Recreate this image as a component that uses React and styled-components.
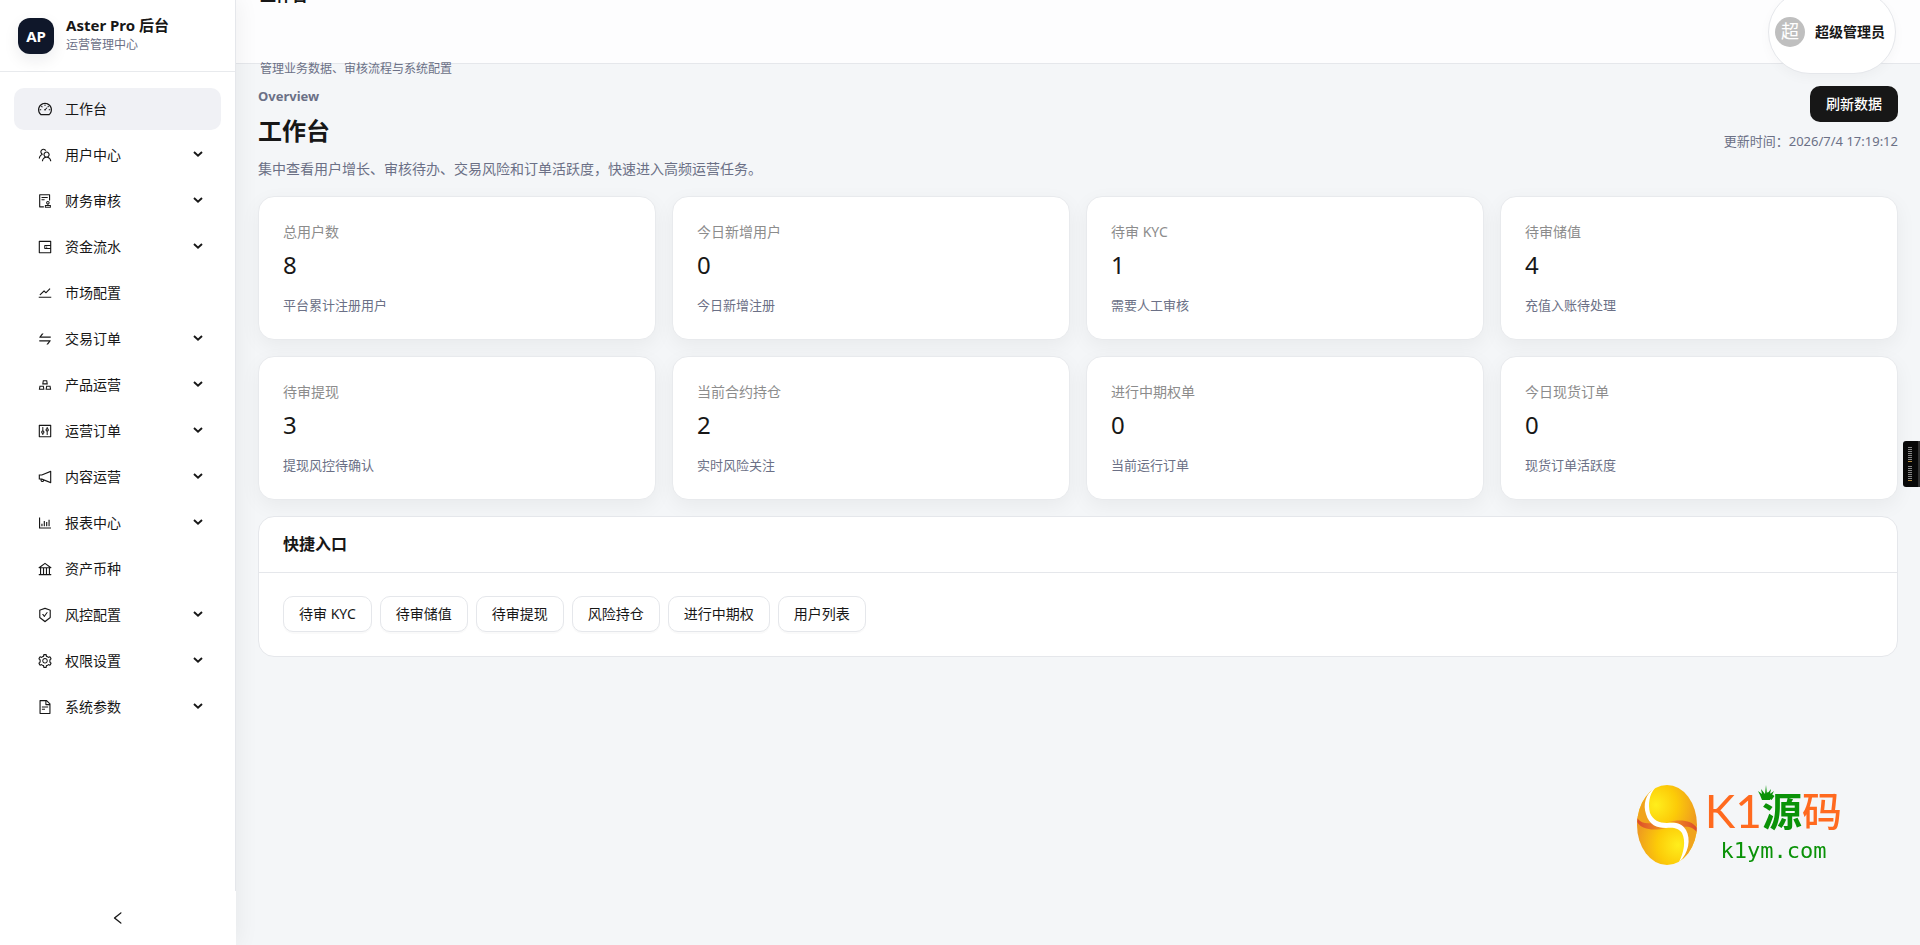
import React from 'react';
import styled, { createGlobalStyle } from 'styled-components';
import {
  AiOutlineDashboard,
  AiOutlineTeam,
  AiOutlineAudit,
  AiOutlineWallet,
  AiOutlineStock,
  AiOutlineSwap,
  AiOutlineGold,
  AiOutlineControl,
  AiOutlineNotification,
  AiOutlineBarChart,
  AiOutlineBank,
  AiOutlineSafetyCertificate,
  AiOutlineSetting,
  AiOutlineFileText,
  AiOutlineLeft,
} from 'react-icons/ai';

const menus = [
  { label: '工作台', icon: AiOutlineDashboard, active: true },
  { label: '用户中心', icon: AiOutlineTeam, sub: true },
  { label: '财务审核', icon: AiOutlineAudit, sub: true },
  { label: '资金流水', icon: AiOutlineWallet, sub: true },
  { label: '市场配置', icon: AiOutlineStock },
  { label: '交易订单', icon: AiOutlineSwap, sub: true },
  { label: '产品运营', icon: AiOutlineGold, sub: true },
  { label: '运营订单', icon: AiOutlineControl, sub: true },
  { label: '内容运营', icon: AiOutlineNotification, sub: true },
  { label: '报表中心', icon: AiOutlineBarChart, sub: true },
  { label: '资产币种', icon: AiOutlineBank },
  { label: '风控配置', icon: AiOutlineSafetyCertificate, sub: true },
  { label: '权限设置', icon: AiOutlineSetting, sub: true },
  { label: '系统参数', icon: AiOutlineFileText, sub: true },
];

const stats = [
  { title: '总用户数', value: 8, note: '平台累计注册用户' },
  { title: '今日新增用户', value: 0, note: '今日新增注册' },
  { title: '待审 KYC', value: 1, note: '需要人工审核' },
  { title: '待审储值', value: 4, note: '充值入账待处理' },
  { title: '待审提现', value: 3, note: '提现风控待确认' },
  { title: '当前合约持仓', value: 2, note: '实时风险关注' },
  { title: '进行中期权单', value: 0, note: '当前运行订单' },
  { title: '今日现货订单', value: 0, note: '现货订单活跃度' },
];

const shortcuts = ['待审 KYC', '待审储值', '待审提现', '风险持仓', '进行中期权', '用户列表'];

const Chevron = () => (
  <svg width="10" height="10" viewBox="0 0 10 10" fill="none" aria-hidden="true">
    <path d="M1 2 5 5.8 9 2" stroke="currentColor" strokeWidth="1.9" />
  </svg>
);

const Sidebar = () => (
  <Sider>
    <Brand>
      <BrandMark>AP</BrandMark>
      <BrandText>
        <BrandName>Aster Pro 后台</BrandName>
        <BrandNote>运营管理中心</BrandNote>
      </BrandText>
    </Brand>
    <Menu>
      {menus.map(({ label, icon: Icon, sub, active }) => (
        <li key={label}>
          {sub ? (
            <MenuItem as="button" type="button" aria-expanded="false">
              <Icon size={16} />
              <span>{label}</span>
              <Chevron />
            </MenuItem>
          ) : (
            <MenuItem href="#" $active={active}>
              <Icon size={16} />
              <span>{label}</span>
            </MenuItem>
          )}
        </li>
      ))}
    </Menu>
    <Collapse type="button" aria-label="收起菜单">
      <AiOutlineLeft size={16} />
    </Collapse>
  </Sider>
);

const SiteLogo = () => (
  <Logo>
    <svg width="60" height="80" viewBox="0 0 60 80" aria-hidden="true">
      <defs>
        <clipPath id="coin">
          <ellipse cx="30" cy="40" rx="30" ry="40" />
        </clipPath>
        <radialGradient id="gold-top" gradientUnits="userSpaceOnUse" cx="19" cy="20" r="42">
          <stop offset="0" stopColor="#ffee1c" />
          <stop offset="0.5" stopColor="#fccb08" />
          <stop offset="1" stopColor="#ee9a20" />
        </radialGradient>
        <radialGradient id="gold-bottom" gradientUnits="userSpaceOnUse" cx="41" cy="60" r="42">
          <stop offset="0" stopColor="#ffee1c" />
          <stop offset="0.5" stopColor="#fccb08" />
          <stop offset="1" stopColor="#ee9a20" />
        </radialGradient>
        <linearGradient id="edge-left" x1="0" y1="0" x2="1" y2="0">
          <stop offset="0" stopColor="#dc4a2c" />
          <stop offset="1" stopColor="#f4a01e" />
        </linearGradient>
        <linearGradient id="edge-right" x1="1" y1="0" x2="0" y2="0">
          <stop offset="0" stopColor="#dc4a2c" />
          <stop offset="1" stopColor="#f4a01e" />
        </linearGradient>
      </defs>
      <g clipPath="url(#coin)">
        <path d="M0 0H60V44C54 41 48 40 40 40H0Z" fill="url(#gold-top)" />
        <path d="M0 35C6 40 14 42 26 41H40C48 40 54 42 60 46V80H0Z" fill="url(#gold-bottom)" />
        <path d="M18 0C2 8-4 24 0 36 6 40 11 40 17 39 5 28 8 12 18 2Z" fill="#f0a41e" />
        <path d="M42 80C58 72 62 56 60 44 54 41 49 41 44 41 55 52 52 68 42 78Z" fill="#f0a41e" />
        <path d="M0 33C4 38 9 39 15 38 18 41 23 43 29 43 17 46 5 45 0 37Z" fill="url(#edge-left)" />
        <path d="M60 47C56 42 51 41 46 42 42 38 37 37 31 37 43 34 55 35 60 43Z" fill="url(#edge-right)" />
      </g>
      <path
        d="M18 3C8 9 6 20 9 29 12 40 20 43 29 43 36 42 42 43 45 48 49 56 47 67 42 77 52 68 54 54 49 45 45 38 38 37 30 38 22 38 16 35 13 28 11 19 12 10 18 3Z"
        fill="#fff"
      />
    </svg>
    <div>
      <LogoTitle>
        <LogoLatin>K1</LogoLatin>
        <LogoGreen>
          <Crown width="16" height="16" viewBox="0 0 16 16" aria-hidden="true">
            <path
              d="M4 15 2 10 0 6l4 3-1-5 4 5L8 0l1 9 4-5-1 5 4-3-2 4-2 5Z"
              fill="#0a9208"
            />
          </Crown>
          源
        </LogoGreen>
        <LogoOrange>码</LogoOrange>
      </LogoTitle>
      <LogoDomain>k1ym.com</LogoDomain>
    </div>
  </Logo>
);

const App = () => {
  return (
    <Layout>
      <GlobalStyle />
      <Sidebar />
      <Main>
        <Header>
          <HeaderText>
            <HeaderTitle>工作台</HeaderTitle>
            <HeaderNote>管理业务数据、审核流程与系统配置</HeaderNote>
          </HeaderText>
          <UserPill type="button">
            <Avatar>超</Avatar>
            <span>超级管理员</span>
          </UserPill>
        </Header>
        <Content>
          <PageHead>
            <div>
              <Eyebrow>Overview</Eyebrow>
              <PageTitle>工作台</PageTitle>
              <PageNote>集中查看用户增长、审核待办、交易风险和订单活跃度，快速进入高频运营任务。</PageNote>
            </div>
            <PageActions>
              <RefreshButton type="button">刷新数据</RefreshButton>
              <UpdatedAt>更新时间：2026/7/4 17:19:12</UpdatedAt>
            </PageActions>
          </PageHead>
          <StatGrid>
            {stats.map(({ title, value, note }) => (
              <StatCard key={title}>
                <StatTitle>{title}</StatTitle>
                <StatValue>{value}</StatValue>
                <StatNote>{note}</StatNote>
              </StatCard>
            ))}
          </StatGrid>
          <Panel>
            <PanelTitle>快捷入口</PanelTitle>
            <PanelBody>
              {shortcuts.map((name) => (
                <ShortcutButton type="button" key={name}>
                  {name}
                </ShortcutButton>
              ))}
            </PanelBody>
          </Panel>
        </Content>
      </Main>
      <SiteLogo />
      <SideWidget aria-hidden="true">
        <WidgetBars />
        <WidgetBars />
      </SideWidget>
    </Layout>
  );
};
export default App;

const GlobalStyle = createGlobalStyle`
  * {
    box-sizing: border-box;
  }
  body {
    margin: 0;
    background-color: #f4f6f8;
    color: #171717;
    font-family: 'Noto Sans', 'Noto Sans CJK SC', sans-serif;
    font-size: 14px;
    line-height: 22px;
  }
  button {
    font: inherit;
    color: inherit;
    cursor: pointer;
  }
  h1, h2, p, ul {
    margin: 0;
    padding: 0;
  }
`;
const Layout = styled.div`
  display: flex;
  min-height: 100vh;
`;
const Sider = styled.aside`
  position: sticky;
  top: 0;
  z-index: 3;
  display: flex;
  flex-direction: column;
  flex: 0 0 236px;
  height: 100vh;
  background-color: #fff;
  border-right: 1px solid #e5e7eb;
  box-shadow: 4px 0 20px rgba(0, 0, 0, 0.05);
`;
const Brand = styled.div`
  display: flex;
  align-items: center;
  gap: 12px;
  flex: 0 0 72px;
  padding: 0 18px;
  border-bottom: 1px solid #e8eaed;
`;
const BrandMark = styled.div`
  display: flex;
  align-items: center;
  justify-content: center;
  width: 36px;
  height: 36px;
  border-radius: 12px;
  background-color: #0f172a;
  box-shadow: 0 6px 16px rgba(15, 23, 42, 0.08);
  color: #fff;
  font-size: 15px;
  font-weight: 700;
`;
const BrandText = styled.div`
  padding-bottom: 2px;
`;
const BrandName = styled.div`
  font-size: 15px;
  font-weight: 700;
  line-height: 20px;
`;
const BrandNote = styled.div`
  color: #6b7086;
  font-size: 12px;
  line-height: 20px;
`;
const Menu = styled.ul`
  display: flex;
  flex-direction: column;
  gap: 4px;
  flex: 1;
  min-height: 0;
  overflow: hidden;
  padding: 16px 14px;
  list-style: none;
`;
const MenuItem = styled.a`
  display: flex;
  align-items: center;
  gap: 12px;
  width: 100%;
  height: 42px;
  padding: 0 18px 0 23px;
  border: none;
  border-radius: 10px;
  background-color: ${({ $active }) => ($active ? '#f0f1f5' : 'transparent')};
  color: #171717;
  text-align: left;
  text-decoration: none;
  span {
    flex: 1;
  }
`;
const Collapse = styled.button`
  display: flex;
  align-items: center;
  justify-content: center;
  flex: 0 0 54px;
  margin-right: -1px;
  border: none;
  background-color: #fff;
`;
const Main = styled.div`
  flex: 1;
  min-width: 0;
`;
const Header = styled.header`
  position: sticky;
  top: 0;
  z-index: 2;
  display: flex;
  align-items: center;
  justify-content: space-between;
  height: 64px;
  padding: 0 24px;
  background-color: #fdfdfe;
  border-bottom: 1px solid #e5e7eb;
  line-height: 64px;
`;
const HeaderText = styled.div`
  display: flex;
  flex-direction: column;
  gap: 10px;
`;
const HeaderTitle = styled.div`
  font-size: 16px;
  font-weight: 700;
`;
const HeaderNote = styled.div`
  color: #6b7086;
  font-size: 12px;
`;
const UserPill = styled.button`
  display: flex;
  align-items: center;
  gap: 10px;
  padding: 9px 10px 9px 6px;
  border: 1px solid #e5e7eb;
  border-radius: 999px;
  background-color: #fff;
  box-shadow: 0 4px 12px rgba(0, 0, 0, 0.03);
  font-weight: 600;
  line-height: 64px;
`;
const Avatar = styled.span`
  width: 30px;
  height: 30px;
  border-radius: 50%;
  background-color: #bfbfbf;
  color: #fff;
  font-size: 18px;
  font-weight: 400;
  line-height: 28px;
  text-align: center;
`;
const Content = styled.main`
  display: flex;
  flex-direction: column;
  gap: 16px;
  padding: 22px;
`;
const PageHead = styled.div`
  display: flex;
  justify-content: space-between;
`;
const Eyebrow = styled.div`
  color: #6b7086;
  font-size: 13px;
  font-weight: 700;
  line-height: 20px;
`;
const PageTitle = styled.h1`
  margin: 6px 0 8px;
  font-size: 24px;
  font-weight: 700;
  line-height: 38px;
`;
const PageNote = styled.p`
  color: #6b7086;
`;
const PageActions = styled.div`
  display: flex;
  flex-direction: column;
  align-items: flex-end;
  gap: 8px;
`;
const RefreshButton = styled.button`
  height: 36px;
  padding: 0 16px;
  border: none;
  border-radius: 10px;
  background-color: #171717;
  color: #fff;
  font-weight: 500;
`;
const UpdatedAt = styled.div`
  color: #6b7086;
  font-size: 13px;
`;
const StatGrid = styled.div`
  display: grid;
  grid-template-columns: repeat(4, 1fr);
  gap: 16px;
  @media (max-width: 1024px) {
    grid-template-columns: repeat(2, 1fr);
  }
`;
const StatCard = styled.section`
  padding: 24px;
  border: 1px solid #e8eaed;
  border-radius: 16px;
  background-color: #fff;
  box-shadow: 0 6px 20px rgba(0, 0, 0, 0.05);
`;
const StatTitle = styled.div`
  color: #8c8c8c;
`;
const StatValue = styled.div`
  margin: 4px 0 12px;
  font-size: 24px;
  line-height: 36px;
`;
const StatNote = styled.div`
  color: #6b7086;
  font-size: 13px;
  line-height: 20px;
`;
const Panel = styled.section`
  border: 1px solid #e5e7eb;
  border-radius: 16px;
  background-color: #fff;
`;
const PanelTitle = styled.h2`
  padding: 0 24px;
  border-bottom: 1px solid #e5e7eb;
  font-size: 16px;
  font-weight: 600;
  line-height: 55px;
`;
const PanelBody = styled.div`
  display: flex;
  flex-wrap: wrap;
  gap: 8px;
  padding: 23px 24px 24px;
`;
const ShortcutButton = styled.button`
  height: 36px;
  padding: 0 15px;
  border: 1px solid #e5e7eb;
  border-radius: 10px;
  background-color: #fff;
  box-shadow: 0 2px 0 rgba(0, 0, 0, 0.02);
`;
const Logo = styled.div`
  position: fixed;
  right: 78px;
  bottom: 80px;
  z-index: 4;
  display: flex;
  align-items: center;
  gap: 8px;
`;
const LogoTitle = styled.div`
  display: flex;
  align-items: center;
  line-height: 52px;
`;
const LogoLatin = styled.span`
  color: #ff6a1f;
  font-family: Lato, sans-serif;
  font-size: 46px;
`;
const LogoGreen = styled.span`
  position: relative;
  color: #0a9208;
  font-size: 40px;
  font-weight: 700;
`;
const LogoOrange = styled.span`
  color: #ff6a1f;
  font-size: 40px;
  font-weight: 500;
`;
const Crown = styled.svg`
  position: absolute;
  top: 0;
  left: -4px;
`;
const LogoDomain = styled.div`
  color: #0a9208;
  font-family: 'DejaVu Sans Mono', monospace;
  font-size: 22px;
  line-height: 28px;
  text-align: center;
`;
const SideWidget = styled.div`
  position: fixed;
  top: 441px;
  right: 0;
  z-index: 4;
  display: flex;
  flex-direction: column;
  align-items: center;
  justify-content: center;
  gap: 4px;
  width: 17px;
  height: 46px;
  padding-right: 2px;
  border-right: 2px solid #333;
  border-radius: 3px 0 0 3px;
  background-color: #080808;
`;
const WidgetBars = styled.div`
  width: 4px;
  height: 15px;
  background: repeating-linear-gradient(#888 0 1px, transparent 1px 2px);
  border-bottom: 1px solid #b08a40;
`;
